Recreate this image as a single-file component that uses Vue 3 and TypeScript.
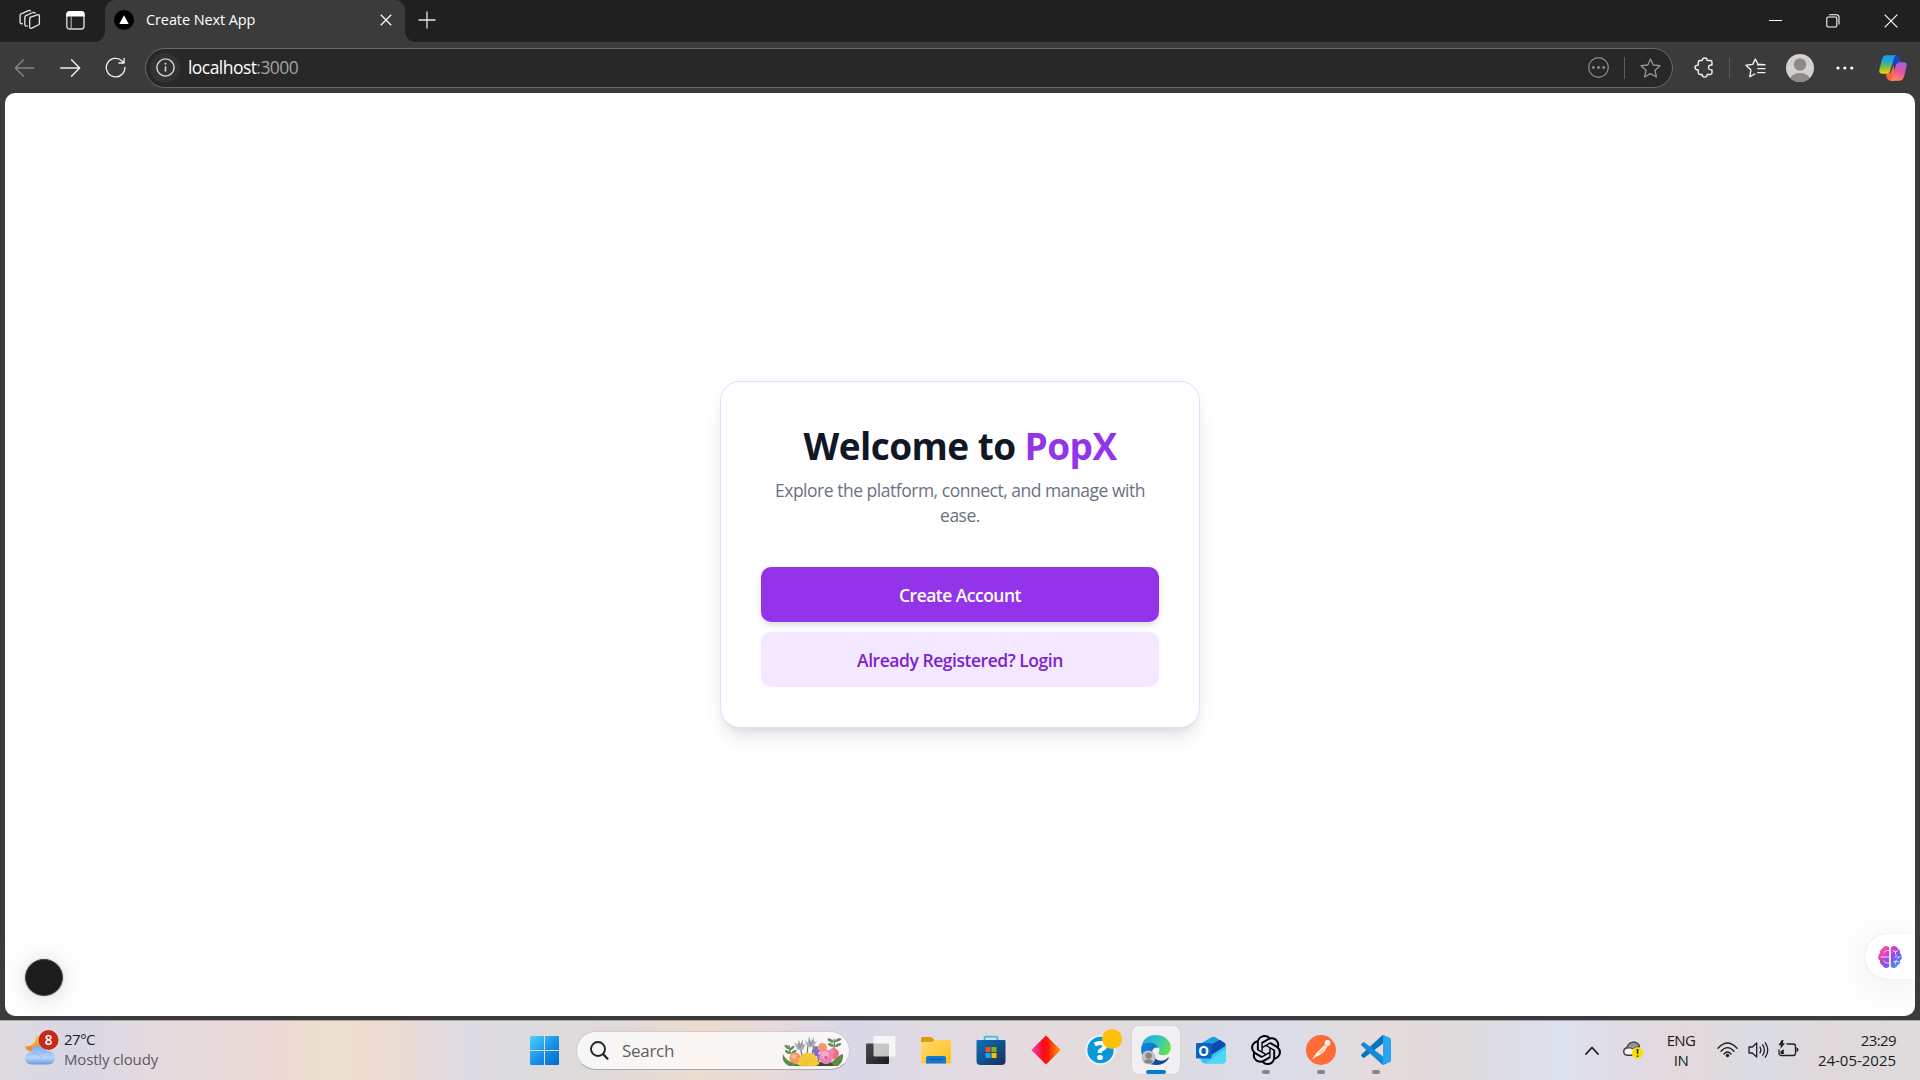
<script setup lang="ts">
interface Blossom { x: number; y: number; r: number; c: string }

const blossoms: Blossom[] = [
  { x: 13, y: 22, r: 5.6, c: '#ee9468' },
  { x: 12, y: 20.5, r: 2.8, c: '#f7b58c' },
  { x: 40.5, y: 11.5, r: 4.6, c: '#f29a68' },
  { x: 51.5, y: 17.5, r: 5.4, c: '#ef6f86' },
  { x: 50, y: 15.5, r: 2.4, c: '#f58f9c' },
  { x: 44, y: 21, r: 7.2, c: '#ee82b8' },
  { x: 43, y: 19, r: 4, c: '#f8a6cd' },
  { x: 44, y: 21.5, r: 1.7, c: '#dd609c' },
]
const petals: number[] = [-85, -62, -40, -20, 0, 20, 40, 62, 85]
</script>

<template>
  <div class="screen">
    <header class="tabstrip">
      <svg class="ic workspaces" width="22" height="22" viewBox="0 0 22 22" fill="none" stroke="#e6e6e6" stroke-width="1.3" stroke-linejoin="round" stroke-linecap="round">
        <path d="M11 8.3 18.3 5.8q2.1-.5 2.1 1.4v7q0 1.300-1.200 1.800l-6.500 3.200q-2 .7-2-1.100V9.900q0-1.100 1-1.600z" />
        <path d="M8.300 16.900 7.200 17.200q-1.400 0-1.400-1.500V8.400q0-1.200 1-1.700l7.300-3.200q1.600-.4 2 .7" />
        <path d="M3.300 14.600 2.300 14.800Q1.100 14.600 1.100 13.300V6.500q0-1.300 1-1.700L9.400 1.600q1.500-.5 2.100.4" />
      </svg>
      <svg class="ic vtabs" width="19" height="19" viewBox="0 0 19 19">
        <rect x=".8" y=".8" width="17.200" height="17.200" rx="2.800" fill="none" stroke="#d8d8d8" stroke-width="1.400" />
        <path d="M.3 5.500V3.500Q.3.300 3.500.300h12Q18.600.300 18.600 3.500v2z" fill="#fff" />
        <path d="M5.200 5v13" stroke="#a8a8a8" stroke-width="1.200" />
      </svg>
      <div class="tab">
        <svg width="20" height="20" viewBox="0 0 20 20"><circle cx="10" cy="10" r="10" fill="#000" /><path d="M10 5.200 14.700 14H5.300z" fill="#fff" /></svg>
        <span class="tab-title">Create Next App</span>
        <svg class="tab-close" width="12" height="12" viewBox="0 0 12 12" stroke="#f2f2f2" stroke-width="1.400"><path d="M.8.800 11.200 11.200M11.200.800.800 11.200" /></svg>
      </div>
      <svg class="newtab" width="18" height="18" viewBox="0 0 18 18" stroke="#e6e6e6" stroke-width="1.300"><path d="M9 .5v17M.5 9h17" /></svg>
      <div class="winctl">
        <svg width="13" height="13" viewBox="0 0 13 13" stroke="#fff" stroke-width="1"><path d="M0 6.500h13" /></svg>
        <svg width="14" height="14" viewBox="0 0 14 14" fill="none" stroke="#fff" stroke-width="1.100"><rect x=".8" y="3" width="10" height="10" rx="1.200" /><path d="M3 .8h7.500q2.500 0 2.500 2.500V10.500" /></svg>
        <svg width="14" height="14" viewBox="0 0 14 14" stroke="#fff" stroke-width="1.200"><path d="M.7.700 13.300 13.300M13.300.700.700 13.300" /></svg>
      </div>
    </header>

    <div class="toolbar">
      <svg class="back" width="21" height="18" viewBox="0 0 21 18" fill="none" stroke="#868686" stroke-width="1.300" stroke-linecap="round" stroke-linejoin="round"><path d="M9.500 .8 1.300 9 9.500 17.200M1.500 9h18.500" /></svg>
      <svg class="forward" width="21" height="18" viewBox="0 0 21 18" fill="none" stroke="#f0f0f0" stroke-width="1.400" stroke-linecap="round" stroke-linejoin="round"><path d="M11.500 .8 19.700 9 11.500 17.200M19.500 9H.8" /></svg>
      <svg class="reload" width="21" height="21" viewBox="0 0 22 22" fill="none" stroke="#f0f0f0" stroke-width="1.400" stroke-linecap="round" stroke-linejoin="round"><path d="M20.800 11A9.700 9.700 0 1 1 17.800 4.100L19.800 6M20 1.500V6.300H14.600" /></svg>
      <div class="address">
        <span class="info">
          <svg width="19" height="19" viewBox="0 0 19 19" fill="none" stroke="#dedede" stroke-width="1.400"><circle cx="9.500" cy="9.500" r="8.600" /><path d="M9.500 8.400v5.200" stroke-width="1.500" /><circle cx="9.500" cy="5.800" r=".95" fill="#dedede" stroke="none" /></svg>
        </span>
        <span class="url">localhost<span class="port">:3000</span></span>
        <svg class="ellipsis" width="21" height="21" viewBox="0 0 21 21" fill="none" stroke="#8e8e8e" stroke-width="1.200"><circle cx="10.500" cy="10.500" r="9.800" /><g fill="#a0a0a0" stroke="none"><circle cx="5.300" cy="10.500" r="1.300" /><circle cx="10.500" cy="10.500" r="1.300" /><circle cx="15.700" cy="10.500" r="1.300" /></g></svg>
        <i class="rule" />
        <svg width="21" height="20" viewBox="0 0 21 20" fill="none" stroke="#969696" stroke-width="1.300" stroke-linejoin="round"><path d="M10.500 1 13.200 7 20 7.700 15 12.300 16.400 19 10.500 15.600 4.600 19 6 12.300 1 7.700 7.800 7z" /></svg>
      </div>
      <svg class="puzzle" width="20" height="21" viewBox="0 0 20 21" fill="none" stroke="#f0f0f0" stroke-width="1.400" stroke-linejoin="round"><path d="M4.300 5.200Q4.300 3.500 6 3.500H8.200C8.200 .1 13.200 .1 13.200 3.500H16.300Q18 3.500 18 5.200V8.100C13.300 7.400 13.300 13.400 18 12.900V15.800Q18 17.500 16.300 17.500H13.200C13.200 21 8.200 21 8.200 17.500H6Q4.300 17.500 4.300 15.800V13C-.1 13-.1 8.100 4.300 8.100z" /></svg>
      <i class="rule rule-dark" />
      <svg class="favs" width="22" height="20" viewBox="0 0 22 20" fill="none" stroke="#f0f0f0" stroke-width="1.400" stroke-linejoin="round" stroke-linecap="round"><path d="M19 6.800 13 6.200 10.300 1 7.700 6.400 1 7.300 5.900 12 4.800 18.700 9.900 16M12.500 6.700H20M12.800 10.600H20M12.800 14.600H20" /></svg>
      <svg class="avatar" width="28" height="28" viewBox="0 0 28 28"><defs><clipPath id="av"><circle cx="14" cy="14" r="14" /></clipPath></defs><g clip-path="url(#av)"><rect width="28" height="28" fill="#d3d0cd" /><circle cx="14" cy="10.500" r="6.200" fill="#8e8a87" /><ellipse cx="14" cy="27" rx="10.500" ry="8" fill="#8e8a87" /></g></svg>
      <svg class="more" width="18" height="4" viewBox="0 0 18 4" fill="#fff"><circle cx="2" cy="2" r="1.600" /><circle cx="8.800" cy="2" r="1.600" /><circle cx="15.800" cy="2" r="1.600" /></svg>
      <svg class="copilot" width="28" height="26" viewBox="0 0 28 26">
        <defs>
          <linearGradient id="cpA" x1="0" y1="0" x2="0" y2="1"><stop offset="0" stop-color="#1b9df0" /><stop offset=".3" stop-color="#1fa5d5" /><stop offset=".6" stop-color="#6dbb4d" /><stop offset="1" stop-color="#f8d00a" /></linearGradient>
          <linearGradient id="cpB" x1=".6" y1="0" x2=".3" y2="1"><stop offset="0" stop-color="#a55be8" /><stop offset=".5" stop-color="#e8559b" /><stop offset="1" stop-color="#ff8c55" /></linearGradient>
        </defs>
        <path d="M12 .300H17.500Q19.800.500 20.600 3L21.800 7.500H19Q16.500 7.600 15.800 10L13.500 13z" fill="#1747c8" />
        <path d="M16 25.700H11Q8.600 25.500 7.800 22.800L6.500 18.300H9.300Q11.800 18.200 12.500 15.500L15 10z" fill="#f8683b" />
        <path d="M7.500.300H17.200Q15.500.900 14.900 3L11.300 15.500Q10.400 18.700 7.300 18.700H3Q-.5 18.500.4 14.600L3 4.200Q4.200.500 7.500.300z" fill="url(#cpA)" />
        <path d="M20.500 25.700H11Q12.600 25.100 13.200 23L16.800 10.400Q17.700 7.200 20.700 7.200H25Q28.500 7.500 27.600 11.300L25 21.800Q23.800 25.500 20.500 25.700z" fill="url(#cpB)" />
      </svg>
    </div>

    <div class="frame">
      <main class="page">
        <section class="card">
          <h1>Welcome to <span class="brand">PopX</span></h1>
          <p>Explore the platform, connect, and manage with<br />ease.</p>
          <div class="actions">
            <button class="btn primary">Create Account</button>
            <button class="btn secondary">Already Registered? Login</button>
          </div>
        </section>
        <div class="devdot" />
        <div class="brain">
          <svg width="24" height="24" viewBox="0 0 24 24">
            <defs><linearGradient id="br" x1="0" y1="0" x2="1" y2="1"><stop offset="0" stop-color="#ff9a3c" /><stop offset=".25" stop-color="#f13fb0" /><stop offset=".58" stop-color="#8b4ff0" /><stop offset="1" stop-color="#18b4f8" /></linearGradient></defs>
            <path fill="url(#br)" d="M11.200 2.500V21.500Q10 23.500 7.200 22.800 5 22.300 4.500 20.300 1.500 19 2 15.800-.6 13.800.500 11 .2 9.500 2 8.300 1.400 5 4.300 3.600 5 1.200 7.600.900 10.300.700 11.200 2.500zM12.800 2.500V21.500Q14 23.500 16.800 22.800 19 22.300 19.500 20.300 22.500 19 22 15.800 24.600 13.800 23.500 11 23.800 9.500 22 8.300 22.600 5 19.700 3.600 19 1.200 16.400.900 13.700.700 12.800 2.500z" />
            <path fill="none" stroke="#fff" stroke-width=".8" stroke-linecap="round" d="M11 5.500H8.500L6 7.500M11 12H3M11 18H8.500Q6.500 18 6 16M15 5.500 17.500 7 20 5.500M17.500 7V9M17 12 19 10.500M19 13 22 11.500M15.500 17 18 16 20.500 16.800M18 16 17.300 19" />
          </svg>
        </div>
      </main>
    </div>

    <footer class="taskbar">
      <div class="weather">
        <svg width="36" height="40" viewBox="0 0 36 40">
          <defs>
            <linearGradient id="cl" x1="0" y1="0" x2="0" y2="1"><stop offset="0" stop-color="#7da7ea" /><stop offset=".65" stop-color="#b8d5f7" /><stop offset="1" stop-color="#6899e2" /></linearGradient>
            <linearGradient id="mn" x1="0" y1="0" x2="0" y2="1"><stop offset="0" stop-color="#fcc435" /><stop offset="1" stop-color="#ef7f1b" /></linearGradient>
          </defs>
          <path d="M12.500 5Q19 9 17.500 17.500 12 25 4.500 20.500 1.500 19 1 16.500 12 16.500 12.500 5z" fill="url(#mn)" />
          <path d="M7.500 34.500Q1 34 1 28 1.500 22.500 7 21.700 8 15.500 14.500 15.500 20.500 15.500 22.500 21 31 20 31 27.500 30.500 34.500 24 34.500z" fill="url(#cl)" />
          <path d="M8 23.500Q15 21.500 17 27.500M18 23.500Q20 21.100 23 21.100" fill="none" stroke="#6d9be3" stroke-width="1" opacity=".5" />
          <circle cx="24.500" cy="10" r="10" fill="#c42b1c" />
          <text x="24.500" y="14.900" text-anchor="middle" font-family="Open Sans, sans-serif" font-size="13.500" font-weight="600" fill="#fff">8</text>
        </svg>
        <div class="weather-text"><div>27°C</div><div class="cond">Mostly cloudy</div></div>
      </div>

      <svg class="start" width="29" height="29" viewBox="0 0 29 29">
        <defs><linearGradient id="wn" gradientUnits="userSpaceOnUse" x1="0" y1="0" x2="29" y2="29"><stop offset="0" stop-color="#4fd2ff" /><stop offset=".5" stop-color="#1a95e8" /><stop offset="1" stop-color="#0067cc" /></linearGradient></defs>
        <path fill="url(#wn)" d="M1 0h13v14H0V1q0-1 1-1zM15 0h13q1 0 1 1v13H15zM0 15h14v14H1q-1 0-1-1zM15 15h14v13q0 1-1 1H15z" />
      </svg>

      <div class="search">
        <svg class="lens" width="19" height="19" viewBox="0 0 19 19" fill="none" stroke="#222" stroke-linecap="round"><circle cx="8" cy="8" r="7" stroke-width="1.900" /><path d="M13.200 13.200 17.500 17.700" stroke-width="2.200" /></svg>
        <span class="search-label">Search</span>
        <svg class="flowers" width="62" height="31" viewBox="0 0 62 31">
          <path d="M1 18Q-1 26 7 30H56Q62 25 61 18 55 20 50 26L20 28Q5 28 1 18z" fill="#5f8a42" />
          <path d="M14 30H52L48 26H20z" fill="#344f28" />
          <g fill="none" stroke="#58794a" stroke-width="1.100"><path d="M7 9Q7 18 14 24M52 3Q54 11 48 24M26 9 24 27M18 11 22 27M32 9 28 27" /></g>
          <g fill="#668c5b"><ellipse cx="5" cy="11" rx="3" ry="1.400" transform="rotate(35 5 11)" /><ellipse cx="10" cy="12" rx="3" ry="1.400" transform="rotate(-40 10 12)" /><ellipse cx="5.500" cy="16" rx="3" ry="1.400" transform="rotate(30 5.500 16)" /><ellipse cx="12" cy="16" rx="3" ry="1.400" transform="rotate(-35 12 16)" /><ellipse cx="48.500" cy="4.500" rx="3.400" ry="1.500" transform="rotate(30 48.500 4.500)" /><ellipse cx="56" cy="4" rx="3.400" ry="1.500" transform="rotate(-25 56 4)" /><ellipse cx="49" cy="9" rx="3.200" ry="1.500" transform="rotate(20 49 9)" /><ellipse cx="56" cy="9" rx="3.400" ry="1.500" transform="rotate(-25 56 9)" /></g>
          <g fill="#a9abb8"><path d="M12 6 16 9 16.500 3 18.500 8 21 3 21 9 24 7 21 14Q17 15 15 13zM23 4 26 7 27 0 29 6 32 1 32 6 35 5 31 11Q27 12 25 10z" /></g>
          <path d="M16 7 18 12 20 7M27 4 28.500 9 31 4" fill="none" stroke="#858896" stroke-width="1" />
          <g fill="#8066c8"><circle cx="34" cy="12" r="2" /><circle cx="32.500" cy="15" r="2" /><circle cx="36" cy="15" r="2" /><circle cx="34" cy="18" r="2.300" /><circle cx="37" cy="20" r="2" /><circle cx="35" cy="24" r="2.500" /></g>
          <circle v-for="(b, i) in blossoms" :key="i" :cx="b.x" :cy="b.y" :r="b.r" :fill="b.c" />
          <ellipse v-for="a in petals" :key="a" cx="26" cy="23" rx="2.600" ry="6.300" :transform="`rotate(${a} 26 28)`" fill="#f5cc3c" stroke="#e6b52c" stroke-width=".4" />
        </svg>
      </div>

      <nav class="apps">
        <div class="app"><svg width="30" height="30" viewBox="0 0 30 30"><defs><linearGradient id="tv" x1="0" y1="0" x2="1" y2="1"><stop offset="0" stop-color="#4b4b4b" /><stop offset="1" stop-color="#1d1d1d" /></linearGradient></defs><rect x="0" y="8.500" width="23" height="20.500" rx="1" fill="url(#tv)" /><rect x="7.500" y="1" width="22" height="20.500" rx="1" fill="#fff" opacity=".72" /></svg></div>
        <div class="app"><svg width="30" height="30" viewBox="0 0 30 30"><defs><linearGradient id="fd" x1="0" y1="0" x2="1" y2="1"><stop offset="0" stop-color="#ffdc6c" /><stop offset="1" stop-color="#ffbd20" /></linearGradient></defs><path d="M0 8V3.500Q0 2 1.500 2H9.500Q11 2 12.500 4L13.500 5V9H0z" fill="#dd9b08" /><path d="M0 7H11L13.500 5H28.500Q30 5 30 6.500V28.500H0z" fill="url(#fd)" /><path d="M5 28.500V23Q5 21 7 21H23Q25 21 25 23V28.500z" fill="#1479d0" /><path d="M9 24.500H21" stroke="#0a509a" stroke-width="1.200" stroke-linecap="round" /></svg></div>
        <div class="app"><svg width="30" height="30" viewBox="0 0 30 30"><defs><linearGradient id="st" x1="0" y1="0" x2="1" y2="1"><stop offset="0" stop-color="#0c73bf" /><stop offset="1" stop-color="#1a2e58" /></linearGradient></defs><path d="M8.500 6V2.500Q8.500 1.700 9.500 1.700H20Q21.500 1.700 21.500 3V6" fill="none" stroke="#30bfef" stroke-width="1.800" /><path d="M.5 6Q.5 5 1.500 5H28.500Q29.500 5 29.500 6V26Q29.500 30 25.500 30H4.500Q.5 30 .5 26z" fill="url(#st)" /><path d="M9.500 12h5v5h-5z" fill="#f25022" /><path d="M15.500 12h5v5h-5z" fill="#7fba00" /><path d="M9.500 18h5v5h-5z" fill="#17a7ee" /><path d="M15.500 18h5v5h-5z" fill="#ffb900" /></svg></div>
        <div class="app"><svg width="30" height="30" viewBox="0 0 30 30"><defs><linearGradient id="dm"><stop offset="0" stop-color="#ee45ce" /><stop offset=".4" stop-color="#fb0b1c" /><stop offset=".58" stop-color="#fc1a08" /><stop offset="1" stop-color="#ffa51c" /></linearGradient></defs><path d="M15 .5 29.700 15 15 29.500.300 15z" fill="url(#dm)" /></svg></div>
        <div class="app"><svg width="42" height="44" viewBox="0 0 42 44" class="help"><circle cx="20.500" cy="22" r="15" fill="#edf6fb" /><circle cx="20.500" cy="22" r="13.200" fill="#0a97d9" /><text x="20.500" y="31.500" text-anchor="middle" font-family="Open Sans, sans-serif" font-size="27" font-weight="800" fill="#fff">?</text><circle cx="32" cy="11" r="10" fill="#ffc107" /></svg></div>
        <div class="app active"><svg width="30" height="30" viewBox="0 0 30 30">
          <defs>
            <linearGradient id="eg" x1="0" y1=".2" x2="1" y2=".6"><stop offset="0" stop-color="#22a5e4" /><stop offset=".5" stop-color="#2fc5c2" /><stop offset="1" stop-color="#67e34c" /></linearGradient>
            <linearGradient id="eb" x1="0" y1="0" x2="1" y2="1"><stop offset="0" stop-color="#1485d8" /><stop offset="1" stop-color="#0c5bb2" /></linearGradient>
          </defs>
          <path d="M.2 13.500Q1.500 0 15.500 0 26 .5 29.300 9 31.500 18 24.500 20 20 21 17.800 19 17 18 18.200 16.500 19.500 12.500 15 10 6 6 .200 13.500z" fill="url(#eg)" />
          <path d="M.1 15Q.5 7.500 8.500 7.500 15.500 8 17.800 13 13 11 11.200 16 10 23 18 26.500 23 28.300 27.800 23 24 30 15 30 1 29.500.100 15z" fill="url(#eb)" />
          <path d="M11.300 16Q10 22 17 25.300 23 27 27 22.500 28.500 22 27.600 23.500 23 30.500 14 29.500 6 25 11.300 16z" fill="#124d91" />
          <circle cx="7.500" cy="22.500" r="7" fill="#c4c3c3" /><circle cx="7.700" cy="20.600" r="3.200" fill="#898785" /><path d="M2.500 26.500Q7.500 21.500 12.500 26.500 8 31 2.500 26.500z" fill="#898785" />
        </svg></div>
        <div class="app"><svg width="30" height="30" viewBox="0 0 30 30">
          <path d="M4 9 15.500 2.300Q17.500 1.400 19.500 2.300L29.500 9 28 15 10 20 4 16z" fill="#1b9fe0" />
          <path d="M10 17 28 8Q30 8.500 30 11V24Q30 28.500 26 28.500H9Q5 28 4.500 24z" fill="#35c4f3" />
          <path d="M12 11 24 4.800 29.500 8.700Q29.500 11 28 12L12 22z" fill="#0a4bad" />
          <path d="M30 14 9 28.500H26.500Q30 28 30 24.500z" fill="#4bd8f5" />
          <rect x="0" y="8" width="15.500" height="15.500" rx="1.300" fill="#0b62bf" />
          <text x="7.700" y="20.500" text-anchor="middle" font-family="Open Sans, sans-serif" font-size="13.500" font-weight="700" fill="#fff">O</text>
        </svg></div>
        <div class="app run"><svg width="30" height="30" viewBox="0 0 24 24"><path d="M22.2819 9.8211a5.9847 5.9847 0 0 0-.5157-4.9108 6.0462 6.0462 0 0 0-6.5098-2.9A6.0651 6.0651 0 0 0 4.9807 4.1818a5.9847 5.9847 0 0 0-3.9977 2.9 6.0462 6.0462 0 0 0 .7427 7.0966 5.98 5.98 0 0 0 .511 4.9107 6.051 6.051 0 0 0 6.5146 2.9001A5.9847 5.9847 0 0 0 13.2599 24a6.0557 6.0557 0 0 0 5.7718-4.2058 5.9894 5.9894 0 0 0 3.9977-2.9001 6.0557 6.0557 0 0 0-.7475-7.0729zm-9.022 12.6081a4.4755 4.4755 0 0 1-2.8764-1.0408l.1419-.0804 4.7783-2.7582a.7948.7948 0 0 0 .3927-.6813v-6.7369l2.02 1.1686a.071.071 0 0 1 .038.052v5.5826a4.504 4.504 0 0 1-4.4945 4.4944zm-9.6607-4.1254a4.4708 4.4708 0 0 1-.5346-3.0137l.142.0852 4.783 2.7582a.7712.7712 0 0 0 .7806 0l5.8428-3.3685v2.3324a.0804.0804 0 0 1-.0332.0615L9.74 19.9502a4.4992 4.4992 0 0 1-6.1408-1.6464zM2.3408 7.8956a4.485 4.485 0 0 1 2.3655-1.9728V11.6a.7664.7664 0 0 0 .3879.6765l5.8144 3.3543-2.0201 1.1685a.0757.0757 0 0 1-.071 0l-4.8303-2.7865A4.504 4.504 0 0 1 2.3408 7.872zm16.5963 3.8558L13.1038 8.364 15.1192 7.2a.0757.0757 0 0 1 .071 0l4.8303 2.7913a4.4944 4.4944 0 0 1-.6765 8.1042v-5.6772a.79.79 0 0 0-.407-.667zm2.0107-3.0231l-.142-.0852-4.7735-2.7818a.7759.7759 0 0 0-.7854 0L9.409 9.2297V6.8974a.0662.0662 0 0 1 .0284-.0615l4.8303-2.7866a4.4992 4.4992 0 0 1 6.6802 4.66zM8.3065 12.863l-2.02-1.1638a.0804.0804 0 0 1-.038-.0567V6.0742a4.4992 4.4992 0 0 1 7.3757-3.4537l-.142.0805L8.704 5.459a.7948.7948 0 0 0-.3927.6813zm1.0976-2.3654l2.602-1.4998 2.6069 1.4998v2.9994l-2.5974 1.4997-2.6067-1.4997Z" fill="#000" /></svg></div>
        <div class="app run"><svg width="30" height="30" viewBox="0 0 30 30"><circle cx="15" cy="15" r="15" fill="#ff6c37" /><circle cx="21.500" cy="8" r="2.900" fill="#fff0e8" /><path d="M18.500 10 21 12.500 12.500 20.300 7 23.500 10.500 18z" fill="#fff0e8" /><path d="M12 17 7 23.500M21 11 17.500 17 12 20.500" stroke="#fff0e8" stroke-width="1" fill="none" stroke-linecap="round" /><path d="M13 18.500 18.500 13" stroke="#ff8a5e" stroke-width=".7" /></svg></div>
        <div class="app run"><svg width="30" height="30" viewBox="0 0 30 30"><path d="M22 0 22 8.500 3.600 22.600Q2.700 23.200 1.900 22.600L.4 21.200Q-.3 20.400.400 19.600L20.500.900Q21.200.200 22 0z" fill="#0873bd" /><path d="M22 30V21.500L3.600 7.400Q2.700 6.800 1.900 7.400L.4 8.800Q-.3 9.600.400 10.400L20.500 29.100Q21.200 29.800 22 30z" fill="#168bd4" /><path d="M22 .1Q22.600-.1 23.200.200L29 3Q30 3.500 30 4.600V25.400Q30 26.500 29 27L23.200 29.800Q22.400 30.200 21.500 29.600 22 29 22 28V2Q22 1 21.500.400z" fill="#2ba5f2" /></svg></div>
      </nav>

      <div class="tray">
        <svg width="14" height="9" viewBox="0 0 14 9" fill="none" stroke="#1a1a1a" stroke-width="1.800" stroke-linecap="round" stroke-linejoin="round"><path d="M1 8 7 1.500 13 8" /></svg>
        <svg class="onedrive" width="21" height="18" viewBox="0 0 21 18"><path d="M4 14.300Q.7 13.800.700 10.500.8 7.500 4 6.800 5.500 1.200 10.500 1.100 15 1.200 16.500 5L9 14.300z" fill="#f5f3f5" stroke="#404040" stroke-width="1.400" /><path d="M4 7Q5.500 1.500 10.500 1.200 15.500 1.500 16.500 6 13 5 10.500 8 8 6.500 4 7z" fill="#959595" stroke="#404040" stroke-width="1" /><circle cx="14.500" cy="12" r="5.800" fill="#fce100" /><text x="14.500" y="15.700" text-anchor="middle" font-family="Open Sans, sans-serif" font-size="10" font-weight="700" fill="#222">!</text></svg>
        <div class="lang"><div>ENG</div><div>IN</div></div>
        <svg class="wifi" width="21" height="16" viewBox="0 0 21 16" fill="none" stroke="#1f1f1f" stroke-width="1.300" stroke-linecap="round"><path d="M1 6.300Q10.500-4.300 20 6.300M4 9.300Q10.500 1.900 17 9.300M7 12Q10.500 8 14 12" /><circle cx="10.500" cy="13.500" r="1.700" fill="#1f1f1f" stroke="none" /></svg>
        <svg class="vol" width="21" height="18" viewBox="0 0 21 18" fill="none" stroke="#1f1f1f" stroke-width="1.300" stroke-linecap="round" stroke-linejoin="round"><path d="M1 6H4.300L8.700 2V16L4.300 12H1zM12 6Q13.700 9 12 12M14.700 3.800Q18 9 14.700 14.200M17.300 1.800Q22.200 9 17.300 16.200" /></svg>
        <svg class="bat" width="21" height="17" viewBox="0 0 21 17" fill="none" stroke="#1f1f1f" stroke-width="1.300" stroke-linejoin="round"><path d="M8.500 4H15.300Q17.500 4 17.500 6.200V13.300Q17.500 15.500 15.300 15.500H3.500Q1 15.500 1 13V9.500" /><path d="M18.500 7.300Q20.500 8 20.500 9.800 20.500 11.500 18.500 12.200z" fill="#1f1f1f" stroke="none" /><path d="M3.800 0H5.500L4.800 3.200H7L2.300 9 3 5.200H.5zM2.500 14V11.300L5.800 9.300V14z" fill="#1f1f1f" stroke="none" /></svg>
        <div class="clock"><div class="time">23:29</div><div class="date">24-05-2025</div></div>
      </div>
    </footer>
  </div>
</template>

<style>
html, body { margin: 0; overflow: hidden; }
</style>

<style scoped>
.screen { width: 1920px; height: 1080px; display: flex; flex-direction: column; background: #3b3b3b; font-family: "Open Sans", "Noto Sans", sans-serif; overflow: hidden; }
svg { display: block; flex: none; overflow: visible; }
.tabstrip { height: 42px; background: #202020; display: flex; box-sizing: border-box; }
.workspaces { margin: 9px 0 0 19px; }
.vtabs { margin: 11px 0 0 25px; }
.tab { position: relative; width: 300px; height: 42px; margin-left: 20px; background: #3b3b3b; border-radius: 10px 10px 0 0; display: flex; align-items: center; box-sizing: border-box; padding: 0 13px 2px 9px; }
.tab::before, .tab::after { content: ""; position: absolute; bottom: 0; width: 10px; height: 10px; }
.tab::before { left: -10px; background: radial-gradient(circle at 0 0, #202020 9.500px, #3b3b3b 10px); }
.tab::after { right: -10px; background: radial-gradient(circle at 100% 0, #202020 9.500px, #3b3b3b 10px); }
.tab-title { margin-left: 12px; padding-bottom: 1px; color: #fff; font-size: 14.500px; letter-spacing: -0.1px; white-space: nowrap; }
.tab-close { margin-left: auto; }
.newtab { margin: 11px 0 0 13px; }
.winctl { margin-left: auto; display: flex; gap: 44px; padding: 14px 22px 0 0; }
.toolbar { height: 51px; display: flex; align-items: center; box-sizing: border-box; }
.back { margin-left: 14px; }
.forward { margin-left: 25px; }
.reload { margin-left: 24px; }
.address { margin-left: 19px; width: 1528px; height: 40px; box-sizing: border-box; border: 1px solid #6a6a6a; border-radius: 20px; background: #282828; display: flex; align-items: center; padding: 0 11px 0 4px; }
.info { width: 30px; height: 30px; border-radius: 50%; background: #333; display: flex; align-items: center; justify-content: center; }
.url { margin-left: 8px; padding-bottom: 1px; color: #fff; font-size: 17.500px; letter-spacing: -0.55px; }
.port { color: #a3a3a3; }
.ellipsis { margin-left: auto; }
.rule { width: 1px; height: 22px; background: #5c5c5c; margin: 0 15px; }
.puzzle { margin-left: 21px; }
.rule-dark { background: #5a5a5a; height: 20px; }
.avatar { margin-left: 19px; }
.more { margin-left: 22px; }
.copilot { margin-left: 25px; }
.frame { height: 927px; padding: 0 5px 4px; box-sizing: border-box; }
.page { position: relative; height: 923px; background: #fff; border-radius: 10px; overflow: hidden; display: flex; align-items: center; justify-content: center; }
.card { width: 480px; box-sizing: border-box; border: 1px solid #ead8ff; border-radius: 20px; padding: 41px 40px 40px; text-align: center; background: #fff; box-shadow: 0 12.500px 19px -4px rgba(0,0,0,.1), 0 5px 7.500px -5px rgba(0,0,0,.1), 0 0 18px rgba(0,0,0,.02); }
h1 { margin: 0; font-size: 37px; line-height: 45px; font-weight: 700; letter-spacing: -0.56px; color: #101828; white-space: nowrap; }
.brand { color: #9333ea; }
p { margin: 10px -10px 0; font-size: 17.500px; line-height: 25px; color: #6a7282; letter-spacing: -0.48px; }
.actions { margin-top: 39px; display: flex; flex-direction: column; gap: 10px; }
.btn { height: 55px; border: 0; border-radius: 10px; font-family: inherit; font-size: 17.500px; font-weight: 600; padding: 1px 0 0; }
.primary { background: #9333ea; color: #fff; letter-spacing: -0.52px; box-shadow: 0 4px 7px -1px rgba(0,0,0,.14); }
.secondary { background: #f3e8ff; color: #7e22ce; letter-spacing: -0.46px; }
.devdot { position: absolute; left: 20px; bottom: 20px; width: 38px; height: 37px; border-radius: 50%; background: #1c1c1d; box-sizing: border-box; border: 1px solid #444; box-shadow: 0 0 0 1px rgba(0,0,0,.08), 0 2px 20px rgba(0,0,0,.12), 0 0 60px rgba(0,0,0,.09); }
.brain { position: absolute; right: 0; bottom: 37px; width: 50px; height: 45px; box-sizing: border-box; padding: 11px 0 0 13px; border-radius: 23px 0 0 23px; background: #fff; box-shadow: 0 0 1px rgba(0,0,0,.2), 0 6px 50px rgba(0,0,0,.1); }
.taskbar { position: relative; height: 60px; display: flex; align-items: center; box-sizing: border-box; border-top: 1px solid #aaa8ab; padding-bottom: 1px; color: #1b1b1b; font-size: 15px; line-height: 20px;
  background: linear-gradient(90deg, #dedbe0 0, #d9d7e5 70px, #e6dadd 170px, #ebd9d6 270px, #eddfce 330px, #ecdbd1 390px, #dedbe3 460px, #dcdbdd 530px, #e0dad8 620px, #ecdccd 700px, #e7d9da 770px, #dad8e8 850px, #e2dbe1 960px, #e4dbdc 1090px, #dddbe2 1180px, #dadde9 1280px, #e5dbdc 1380px, #e2dada 1420px, #dcdbdf 1480px, #dce1ef 1560px, #e1dae2 1640px, #e2dadb 1700px, #dadce5 1760px, #e0d9db 1820px, #dddbdd 1920px); }
.weather { width: 505px; display: flex; align-items: flex-start; padding-left: 24px; box-sizing: border-box; }
.weather-text { margin: -1px 0 0 4px; }
.weather-text div { letter-spacing: -0.5px; }
.weather-text .cond { color: #5d5a5f; letter-spacing: -0.16px; }
.start { margin-left: 25px; }
.search { margin-left: 17px; width: 274px; height: 39px; border-radius: 20px; box-sizing: border-box; border: 1px solid #cfccd2; border-bottom-color: #aaa8ad; background: linear-gradient(90deg, #f6f6f7, #faf5f1 45%, #f8f6f8); display: flex; align-items: center; color: #5e5e5e; font-size: 17px; letter-spacing: -0.3px; }
.search-label { padding-top: 1px; }
.lens { margin: 0 13px 0 13px; }
.flowers { margin: 2px 5px 0 auto; }
.apps { display: flex; margin-left: 3px; }
.app { position: relative; width: 48px; height: 48px; margin: 0 3.500px; border-radius: 6px; display: flex; align-items: center; justify-content: center; }
.active { background: #f2eff2; box-shadow: 0 0 1px rgba(0,0,0,.25); }
.active::after, .run::after { content: ""; position: absolute; left: 20px; bottom: 0; width: 8px; height: 4px; border-radius: 2px; background: #858387; }
.active::after { left: 14px; width: 20px; background: #0878d8; }
.help { margin-top: -1px; }
.tray { margin-left: auto; display: flex; align-items: center; padding-right: 24px; }
.onedrive { margin-left: 24px; }
.lang { width: 40px; margin-left: 17px; text-align: center; letter-spacing: -0.6px; }
.wifi { margin-left: 16px; }
.vol { margin-left: 10px; }
.bat { margin-left: 9px; margin-top: -3px; }
.clock { width: 97px; text-align: right; letter-spacing: -0.6px; }
.date { letter-spacing: -0.02px; }
</style>
